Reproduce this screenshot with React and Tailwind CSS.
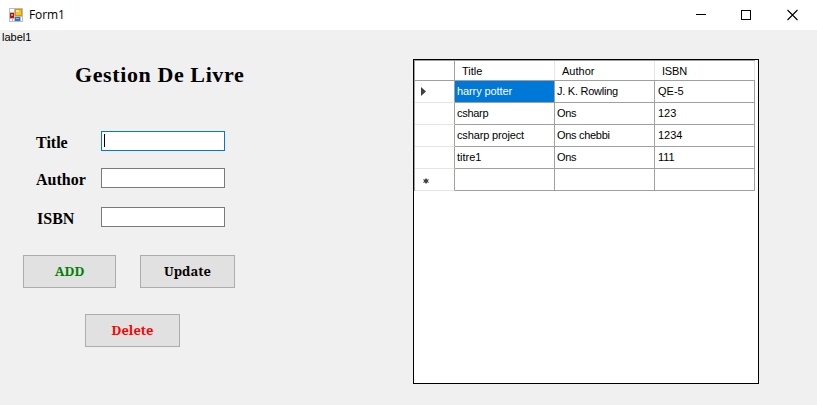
import React from "react";

const rows = [
  { title: "harry potter", author: "J. K. Rowling", isbn: "QE-5", a: "tracking-[-0.1px]", b: "tracking-[-0.25px]" },
  { title: "csharp", author: "Ons", isbn: "123", a: "tracking-[-0.3px]", b: "tracking-[-0.3px]" },
  { title: "csharp project", author: "Ons chebbi", isbn: "1234", a: "tracking-[-0.15px]", b: "tracking-[-0.3px]" },
  { title: "titre1", author: "Ons", isbn: "111", a: "tracking-[0px]", b: "tracking-[-0.3px]" },
  { title: "", author: "", isbn: "", a: "", b: "" },
];

function AppIcon() {
  return (
    <svg width="14" height="14" viewBox="0 0 14 14" shapeRendering="crispEdges" className="block">
      <rect width="14" height="14" fill="#bdbdbd" />
      <rect x="1" y="1" width="4" height="3" fill="#fff" />
      <rect x="1" y="11" width="2" height="2" fill="#fff" />
      <rect x="4" y="11" width="1" height="2" fill="#fff" />
      <rect x="12" y="9" width="1" height="4" fill="#fff" />
      <rect x="1" y="5" width="4" height="5" fill="#b5150f" />
      <rect x="2" y="6" width="2" height="2" fill="#ef8272" />
      <rect x="6" y="1" width="7" height="7" fill="#d19a00" />
      <rect x="7" y="2" width="5" height="5" fill="#f5c32c" />
      <rect x="7" y="2" width="3" height="2" fill="#ffe48a" />
      <rect x="6" y="9" width="5" height="4" fill="#356fce" />
      <rect x="7" y="10" width="3" height="1" fill="#8fb9f5" />
    </svg>
  );
}

function TitleBar() {
  return (
    <header className="flex h-[30px] items-center bg-white pl-[9px] pr-[17px]">
      <AppIcon />
      <span className="ml-[6px] font-['Open_Sans',sans-serif] text-[12px] leading-[16px] tracking-[-0.1px]">Form1</span>
      <svg width="104" height="12" viewBox="0 0 104 12" className="ml-auto block" fill="none" stroke="#000">
        <path d="M0 5.5H10M45.5 1.5H54.5V10.5H45.5Z" shapeRendering="crispEdges" />
        <path d="M91.5 1L101.5 11M101.5 1L91.5 11" strokeWidth="1.1" />
      </svg>
    </header>
  );
}

function Field({ label, labelClass, inputClass, focused }) {
  return (
    <div className="flex h-5">
      <span className={`w-[101px] font-['Liberation_Serif',serif] text-[16px] font-bold leading-[20px] ${labelClass}`}>
        {label}
      </span>
      <div className={`flex h-5 w-[124px] border bg-white ${inputClass}`}>
        {focused && <i className="ml-[2px] mt-[2px] h-[13px] w-px bg-black" />}
      </div>
    </div>
  );
}

function Button({ className, text, textClass }) {
  return (
    <button className={`flex h-[33px] items-center justify-center border border-[#adadad] bg-[#e1e1e1] font-['Noto_Serif','DejaVu_Serif',serif] text-[13px] font-bold ${className}`}>
      <span className={textClass}>{text}</span>
    </button>
  );
}

function DataGrid() {
  return (
    <section className="h-[325px] w-[346px] border border-black bg-white font-['Liberation_Sans',sans-serif] text-[11px] leading-[21px]">
      <div className="w-[341px] border-l border-t border-[#a0a0a0]">
        <div className="flex h-5 border-b border-[#a0a0a0] leading-[20px]">
          <div className="w-10 border-r border-[#a0a0a0]" />
          <div className="w-[100px] border-r border-[#e5e5e5] pl-[7px]">Title</div>
          <div className="w-[100px] border-r border-[#e5e5e5] pl-[7px]">Author</div>
          <div className="w-[100px] border-r border-[#e5e5e5] pl-[7px] tracking-[-0.2px]">ISBN</div>
        </div>
        {rows.map((r, i) => (
          <div key={i} className="flex h-[22px]">
            <div className="flex w-10 items-center border-b border-r border-b-[#e5e5e5] border-r-[#a0a0a0]">
              {i === 0 && (
                <svg width="5" height="9" viewBox="0 0 5 9" className="ml-[6px] block">
                  <path d="M0 0L5 4.5L0 9Z" fill="#404040" />
                </svg>
              )}
              {i === 4 && (
                <svg width="6" height="6" viewBox="0 0 6 6" className="ml-[8px] mt-[3px] block">
                  <circle cx="3" cy="3" r="2.1" fill="#404040" />
                  <path d="M3 0V6M0 1.5L6 4.5M6 1.5L0 4.5" stroke="#404040" strokeWidth="0.7" />
                </svg>
              )}
            </div>
            <div className={`w-[100px] border-b border-r border-[#a0a0a0] pl-[2px] ${r.a} ${i === 0 ? "bg-[#0078d7] text-white" : ""}`}>{r.title}</div>
            <div className={`w-[100px] border-b border-r border-[#a0a0a0] pl-[2px] ${r.b}`}>{r.author}</div>
            <div className="w-[100px] border-b border-r border-[#a0a0a0] pl-[3px]">{r.isbn}</div>
          </div>
        ))}
      </div>
    </section>
  );
}

export default function App() {
  return (
    <div className="h-[405px] w-[817px] overflow-hidden bg-[#f0f0f0] text-black">
      <TitleBar />
      <main className="flex">
        <div className="w-[413px]">
          <p className="h-[14px] pl-[2px] font-['Liberation_Sans',sans-serif] text-[11px] leading-[14px]">label1</p>
          <h1 className="mt-[19px] h-6 whitespace-nowrap pl-[75px] font-['Liberation_Serif',serif] text-[22px] font-bold leading-[24px] tracking-[0.6px]">
            Gestion De Livre
          </h1>
          <div className="mt-[44px]">
            <Field label="Title" labelClass="pl-[36px] pt-[2px]" inputClass="border-[#0078d7]" focused />
          </div>
          <div className="mt-[17px]">
            <Field label="Author" labelClass="pl-[36px] pt-[2px]" inputClass="border-[#7a7a7a]" />
          </div>
          <div className="mt-[19px]">
            <Field label="ISBN" labelClass="pl-[37px] pt-[2px]" inputClass="border-[#7a7a7a]" />
          </div>
          <div className="mt-7 flex gap-6 pl-[23px]">
            <Button className="w-[93px]" text="ADD" textClass="text-[#008000]" />
            <Button className="w-[95px]" text="Update" textClass="text-black" />
          </div>
          <div className="mt-[26px] pl-[85px]">
            <Button className="w-[95px]" text="Delete" textClass="text-[#ff0000]" />
          </div>
        </div>
        <div className="pt-[29px]">
          <DataGrid />
        </div>
      </main>
    </div>
  );
}
